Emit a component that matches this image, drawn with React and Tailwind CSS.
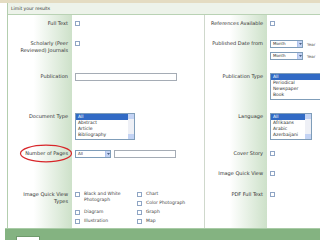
import React from 'react';

const Box = () => (
  <span className="block w-[5px] h-[5px] mt-[1px] border border-[#8fa5c4] bg-white shrink-0" />
);

const Label = ({ children, sep }) => (
  <div
    className={`pt-[5px] pr-[4px] text-right text-[5px] leading-[7px] text-[#333] bg-gradient-to-r from-white from-40% to-[#cde1c9] ${sep ? 'border-l border-[#cfd8cc]' : ''}`}
  >
    {children}
  </div>
);

const Cell = ({ children, className = '' }) => (
  <div className={`pt-[5px] pl-[3px] text-[5px] leading-[7px] ${className}`}>{children}</div>
);

const Arrow = () => (
  <span className="w-[5px] h-full bg-[#c3d3f4] border-l border-[#b0c4ee] flex items-center justify-center">
    <svg width="3" height="2" viewBox="0 0 3 2"><path d="M0 0h3L1.5 2z" fill="#4d6185" /></svg>
  </span>
);

const Select = ({ value, className }) => (
  <div className={`h-[8px] border border-[#7f9db9] bg-white flex items-stretch text-[4px] leading-[6px] text-[#333] ${className}`}>
    <span className="flex-1 pl-[2px]">{value}</span>
    <Arrow />
  </div>
);

const ListBox = ({ items, className, scroll = true }) => (
  <div className={`h-[27px] border border-[#7f9db9] bg-white flex text-[4.5px] leading-[6px] text-[#333] overflow-hidden ${className}`}>
    <div className="flex-1 flex flex-col">
      {items.map((t, i) => (
        <span key={t} className={i === 0 ? 'bg-[#316ac5] text-white pl-[2px]' : 'pl-[2px]'}>{t}</span>
      ))}
    </div>
    {scroll && (
      <div className="w-[6px] bg-[#eef0f6] flex flex-col justify-between">
        <span className="h-[5px] bg-[#c3d3f4]" />
        <span className="h-[5px] bg-[#c3d3f4]" />
      </div>
    )}
  </div>
);

const CheckItem = ({ children }) => (
  <div className="flex items-start gap-[4px] text-[4.5px] leading-[6px] text-[#444] h-[8px]">
    <Box />
    <span>{children}</span>
  </div>
);

export default function App() {
  return (
    <div className="w-[320px] h-[240px] bg-white overflow-hidden flex flex-col relative" style={{ fontFamily: '"DejaVu Sans", Verdana, sans-serif' }}>
      <div className="h-[3px] bg-[#e4dcc2]" />
      <div className="ml-[7px] border-l border-[#b3ceae] flex-1 flex flex-col">
        <div className="h-[12px] bg-[#edf3ea] border-b border-[#b9d2b4] pl-[3px] text-[4.5px] leading-[11px] text-[#333]">
          Limit your results
        </div>
        <div className="grid grid-cols-[64px_132px_63px_53px] grid-rows-[20px_33px_40px_37px_20px_21px_42px]">
          <Label>Full Text</Label>
          <Cell><Box /></Cell>
          <Label sep>References Available</Label>
          <Cell><Box /></Cell>

          <Label>Scholarly (Peer Reviewed) Journals</Label>
          <Cell><Box /></Cell>
          <Label sep>Published Date from</Label>
          <Cell className="flex flex-col gap-[4px]">
            <div className="flex items-center gap-[4px]">
              <Select value="Month" className="w-[33px]" />
              <span className="text-[4px] text-[#555]">Year</span>
            </div>
            <div className="flex items-center gap-[4px]">
              <Select value="Month" className="w-[33px]" />
              <span className="text-[4px] text-[#555]">Year</span>
            </div>
          </Cell>

          <Label>Publication</Label>
          <Cell><div className="w-[102px] h-[8px] border border-[#a5acb5] bg-white" /></Cell>
          <Label sep>Publication Type</Label>
          <Cell><ListBox items={['All', 'Periodical', 'Newspaper', 'Book']} className="w-[60px]" scroll={false} /></Cell>

          <Label>Document Type</Label>
          <Cell><ListBox items={['All', 'Abstract', 'Article', 'Bibliography']} className="w-[60px]" /></Cell>
          <Label sep>Language</Label>
          <Cell><ListBox items={['All', 'Afrikaans', 'Arabic', 'Azerbaijani']} className="w-[42px]" /></Cell>

          <Label>Number of Pages</Label>
          <Cell className="flex gap-[3px]">
            <Select value="All" className="w-[36px]" />
            <div className="w-[62px] h-[8px] border border-[#a5acb5] bg-white" />
          </Cell>
          <Label sep>Cover Story</Label>
          <Cell><Box /></Cell>

          <Label />
          <Cell />
          <Label sep>Image Quick View</Label>
          <Cell><Box /></Cell>

          <Label>Image Quick View Types</Label>
          <Cell className="flex gap-[7px]">
            <div className="w-[55px] flex flex-col gap-[1px]">
              <div className="flex items-start gap-[4px] text-[4.5px] leading-[6px] text-[#444] h-[17px]">
                <Box />
                <span>Black and White Photograph</span>
              </div>
              <CheckItem>Diagram</CheckItem>
              <CheckItem>Illustration</CheckItem>
            </div>
            <div className="flex flex-col gap-[1px]">
              <CheckItem>Chart</CheckItem>
              <CheckItem>Color Photograph</CheckItem>
              <CheckItem>Graph</CheckItem>
              <CheckItem>Map</CheckItem>
            </div>
          </Cell>
          <Label sep>PDF Full Text</Label>
          <Cell><Box /></Cell>
        </div>
      </div>
      <div className="h-[12px] ml-[5px] bg-[#84b381] border-t border-[#a9cba6] pl-[11px] pt-[7px]">
        <div className="w-[24px] h-[5px] bg-white border border-[#6f9a6c]" />
      </div>
      <svg className="absolute left-[19px] top-[144px]" width="54" height="19" viewBox="0 0 54 19">
        <ellipse cx="27" cy="9.5" rx="25.5" ry="8.3" fill="none" stroke="#d8262a" strokeWidth="1.2" />
      </svg>
    </div>
  );
}
